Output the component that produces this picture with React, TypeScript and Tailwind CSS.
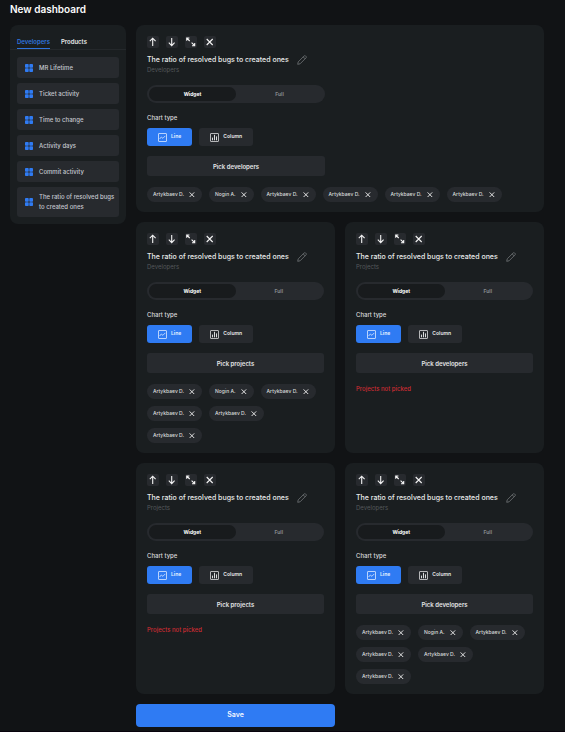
import React, { useState } from 'react';

type Source = 'Developers' | 'Projects';
type ChartType = 'Line' | 'Column';

interface WidgetConfig {
  id: number;
  source: Source;
  pickLabel: string;
  picked: string[];
  wide?: boolean;
}

const WIDGET_TITLE = 'The ratio of resolved bugs to created ones';
const TABS = ['Developers', 'Products'];

const METRICS = [
  'MR Lifetime',
  'Ticket activity',
  'Time to change',
  'Activity days',
  'Commit activity',
  WIDGET_TITLE,
];

const PEOPLE = ['Artykbaev D.', 'Nogin A.', 'Artykbaev D.', 'Artykbaev D.', 'Artykbaev D.', 'Artykbaev D.'];

const WIDGETS: WidgetConfig[] = [
  { id: 1, source: 'Developers', pickLabel: 'Pick developers', picked: PEOPLE, wide: true },
  { id: 2, source: 'Developers', pickLabel: 'Pick projects', picked: PEOPLE },
  { id: 3, source: 'Projects', pickLabel: 'Pick developers', picked: [] },
  { id: 4, source: 'Projects', pickLabel: 'Pick projects', picked: [] },
  { id: 5, source: 'Developers', pickLabel: 'Pick developers', picked: PEOPLE },
];

const ACTIONS = [
  { label: 'Move up', path: 'M5.7 10V2.2M2.8 5.1L5.7 2.2l2.9 2.9' },
  { label: 'Move down', path: 'M5.7 2v7.6M2.8 6.7L5.7 9.6l2.9-2.9' },
  { label: 'Expand', path: 'M1.7 4.7V2h2.7M1.7 2l3 3M9.7 7v2.7H7M9.7 9.7L6.6 6.6' },
  { label: 'Remove', path: 'M2.7 3l6 6M8.7 3l-6 6' },
];

function GridIcon() {
  return (
    <svg viewBox="0 0 8 8" className="w-2 h-2 shrink-0 fill-[#2f7bf3]">
      <rect width="3.7" height="3.7" rx="0.8" />
      <rect x="4.3" width="3.7" height="3.7" rx="0.8" />
      <rect y="4.3" width="3.7" height="3.7" rx="0.8" />
      <rect x="4.3" y="4.3" width="3.7" height="3.7" rx="0.8" />
    </svg>
  );
}

function PencilIcon() {
  return (
    <svg viewBox="0 0 10 10" className="w-[10px] h-[10px]" fill="none" stroke="#74777a" strokeWidth="0.8" strokeLinejoin="round">
      <path d="M0.7 9.3l0.5-2.4L7.2 0.9c0.4-0.4 0.9-0.4 1.3 0l0.6 0.6c0.4 0.4 0.4 0.9 0 1.3L3.1 8.8zM6.2 1.9l1.9 1.9" />
    </svg>
  );
}

function ChartIcon({ type }: { type: ChartType }) {
  return (
    <svg viewBox="0 0 9 9" className="w-[9px] h-[9px]" fill="none" stroke="currentColor" strokeWidth="0.8" strokeLinejoin="round">
      <rect x="0.5" y="0.5" width="8" height="8" rx="0.4" />
      {type === 'Line' ? (
        <path d="M1.6 6l1.7-2 1.6 1.3 2.4-2.4" />
      ) : (
        <path d="M2.5 7.3V4.6M4.5 7.3V1.8M6.5 7.3V3.4" strokeWidth="1" />
      )}
    </svg>
  );
}

function Sidebar() {
  const [tab, setTab] = useState('Developers');

  return (
    <aside className="w-[116px] shrink-0 rounded-lg bg-[#1a1e20] pb-[7px]">
      <div className="flex gap-[11px] px-[7px] pt-[10px] border-b border-[#24282b]">
        {TABS.map((name) => (
          <button
            key={name}
            onClick={() => setTab(name)}
            className={`h-[14px] text-[6px] leading-[12px] font-semibold border-b ${
              tab === name ? 'text-[#2f74de] border-[#2f74de]' : 'text-[#e4e5e6] border-transparent'
            }`}
          >
            {name}
          </button>
        ))}
      </div>
      <ul className="flex flex-col gap-[5px] px-[7px] pt-[7px]">
        {METRICS.map((metric) => (
          <li key={metric}>
            <button className="flex min-h-[21px] w-full items-center gap-[6px] rounded-[3px] bg-[#272a2e] py-[5px] pl-2 pr-1 text-left text-[6px] leading-[10px] font-medium text-[#c4c8ce]">
              <GridIcon />
              <span>{metric}</span>
            </button>
          </li>
        ))}
      </ul>
    </aside>
  );
}

function WidgetCard({ widget }: { widget: WidgetConfig }) {
  const [size, setSize] = useState('Widget');
  const [chartType, setChartType] = useState<ChartType>('Line');
  const [picked, setPicked] = useState(widget.picked);

  const removeAt = (index: number) => {
    setPicked((prev) => prev.filter((_, i) => i !== index));
  };

  return (
    <section className={`rounded-lg bg-[#1a1e20] px-[11px] pt-[11px] pb-[10px] ${widget.wide ? 'col-span-2' : ''}`}>
      <div className="flex gap-[7px]">
        {ACTIONS.map((action) => (
          <button key={action.label} aria-label={action.label} className="w-3 h-3 rounded-[2px] bg-[#272a2e]">
            <svg viewBox="0 0 12 12" className="w-3 h-3" fill="none" stroke="#f4f4f4" strokeWidth="1.1">
              <path d={action.path} />
            </svg>
          </button>
        ))}
      </div>

      <div className="mt-[7px] flex items-center gap-2">
        <h2 className="text-[7px] leading-[10px] font-medium text-[#e9eaea] whitespace-nowrap">{WIDGET_TITLE}</h2>
        <button aria-label="Rename">
          <PencilIcon />
        </button>
      </div>
      <p className="text-[6px] leading-[10px] text-[#54585b]">{widget.source}</p>

      <div className="mt-[10px] flex h-[18px] max-w-[178px] rounded-full bg-[#272a2e] p-[2px]">
        {['Widget', 'Full'].map((option) => (
          <button
            key={option}
            onClick={() => setSize(option)}
            className={`flex-1 rounded-full text-[5px] leading-[14px] font-bold ${
              size === option ? 'bg-[#181b1d] text-white' : 'text-[#85888b]'
            }`}
          >
            {option}
          </button>
        ))}
      </div>

      <p className="mt-[10px] text-[6px] leading-[10px] font-medium text-[#dadcdd]">Chart type</p>
      <div className="mt-[5px] flex gap-[7px]">
        {(['Line', 'Column'] as ChartType[]).map((type) => (
          <button
            key={type}
            onClick={() => setChartType(type)}
            className={`flex h-[18px] items-center gap-1 rounded-[3px] px-[11px] text-[5px] font-bold ${
              chartType === type ? 'bg-[#2f7bf3] text-[#dce9ff]' : 'bg-[#272a2e] text-[#dadcdd]'
            }`}
          >
            <ChartIcon type={type} />
            {type}
          </button>
        ))}
      </div>

      <button className="mt-[10px] block h-5 w-full max-w-[178px] rounded-[3px] bg-[#272a2e] text-[6px] font-semibold text-[#e4e5e6]">
        {widget.pickLabel}
      </button>

      {picked.length > 0 ? (
        <ul className="mt-[11px] flex flex-wrap gap-[7px]">
          {picked.map((name, index) => (
            <li key={index} className="flex h-[15px] items-center gap-[5px] rounded-full bg-[#272a2e] pl-[6px] pr-[7px] text-[5px] font-medium text-[#dadcdd]">
              {name}
              <button aria-label={`Remove ${name}`} onClick={() => removeAt(index)}>
                <svg viewBox="0 0 6 6" className="w-[6px] h-[6px]" stroke="#f4f4f4" strokeWidth="0.9">
                  <path d="M0.6 0.4l4.6 4.6M5.2 0.4L0.6 5" />
                </svg>
              </button>
            </li>
          ))}
        </ul>
      ) : (
        <p className="mt-[11px] text-[6px] leading-[10px] font-medium text-[#cb2c33]">Projects not picked</p>
      )}
    </section>
  );
}

export default function App() {
  return (
    <div className="min-h-screen bg-[#08030c] pb-px font-['Inter','Liberation_Sans',sans-serif]">
      <div className="bg-[#111315] pl-[10px] pr-[21px] pb-1">
        <h1 className="pt-[2px] text-[10px] leading-[14px] font-semibold text-[#fcfcfc]">New dashboard</h1>
        <div className="mt-[9px] flex items-start gap-[10px]">
          <Sidebar />
          <main className="grid min-w-0 flex-1 grid-cols-2 gap-[10px]">
            {WIDGETS.map((widget) => (
              <WidgetCard key={widget.id} widget={widget} />
            ))}
            <button className="h-[23px] rounded-[4px] bg-[#2f7bf3] text-[7px] font-semibold text-[#f4f7ff]">Save</button>
          </main>
        </div>
      </div>
    </div>
  );
}
